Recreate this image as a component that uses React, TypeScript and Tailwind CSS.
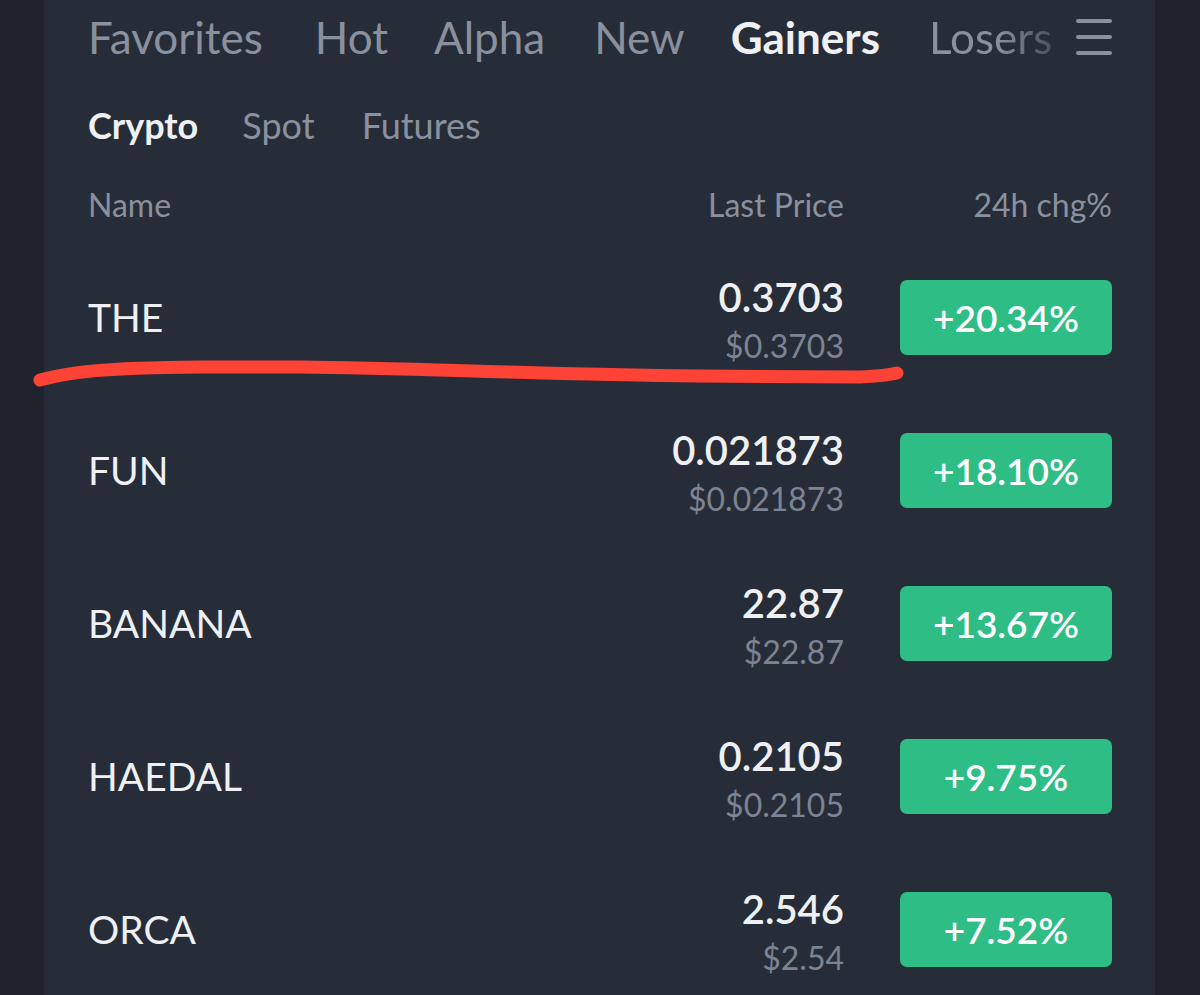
import React from "react";

const rows = [
  { name: "THE", price: "0.3703", usd: "$0.3703", chg: "+20.34%" },
  { name: "FUN", price: "0.021873", usd: "$0.021873", chg: "+18.10%" },
  { name: "BANANA", price: "22.87", usd: "$22.87", chg: "+13.67%" },
  { name: "HAEDAL", price: "0.2105", usd: "$0.2105", chg: "+9.75%" },
  { name: "ORCA", price: "2.546", usd: "$2.54", chg: "+7.52%" },
];

export default function App() {
  return (
    <div
      className="relative w-[1200px] h-[995px] overflow-hidden bg-[#1f242c] flex"
      style={{ fontFamily: "Lato, 'Open Sans', sans-serif" }}
    >
      <div className="w-[44px] shrink-0" />
      <div className="w-[1111px] shrink-0 bg-[#272d38] pl-[44px] pr-[43px] flex flex-col">
        {/* top tabs */}
        <div className="h-[76px] shrink-0 pb-[3px] flex items-center text-[44px] leading-none text-[#8a919e]">
          <span className="mr-[52px]">Favorites</span>
          <span className="mr-[46px]">Hot</span>
          <span className="mr-[49px]">Alpha</span>
          <span className="mr-[46px]">New</span>
          <span className="mr-[49px] font-bold text-[#eef0f3]">Gainers</span>
          <span className="bg-linear-to-r from-[#8a919e] from-55% to-[#4a515e] bg-clip-text text-transparent">
            Losers
          </span>
          <div className="ml-auto mt-[1px] flex flex-col gap-[12px] w-[36px]">
            <div className="h-[4px] rounded-full bg-[#8a919e]" />
            <div className="h-[4px] rounded-full bg-[#8a919e]" />
            <div className="h-[4px] rounded-full bg-[#8a919e]" />
          </div>
        </div>
        {/* sub tabs */}
        <div className="h-[98px] shrink-0 flex items-center text-[36px] leading-none text-[#8a919e]">
          <span className="mr-[44px] font-bold text-[#eef0f3]">Crypto</span>
          <span className="mr-[47px]">Spot</span>
          <span>Futures</span>
        </div>
        {/* header */}
        <div className="h-[67px] shrink-0 pb-[6px] flex items-center text-[32px] leading-none text-[#8a919e]">
          <span className="flex-1">Name</span>
          <span>Last Price</span>
          <span className="w-[268px] text-right">24h chg%</span>
        </div>
        {rows.map((r) => (
          <div key={r.name} className="h-[153px] shrink-0 flex items-center">
            <span className="flex-1 text-[39px] text-[#eef0f3] leading-none">{r.name}</span>
            <div className="flex flex-col items-end mt-[10px]">
              <span className="text-[40px] leading-[46px] font-semibold text-[#eef0f3]">{r.price}</span>
              <span className="text-[32px] leading-[52px] text-[#7c8493]">{r.usd}</span>
            </div>
            <div className="ml-[56px] w-[212px] h-[75px] rounded-[7px] bg-[#2ebd85] flex items-center justify-center text-[37px] font-semibold text-white">
              {r.chg}
            </div>
          </div>
        ))}
      </div>
      <svg className="absolute left-0 top-0" width="1200" height="995" viewBox="0 0 1200 995">
        <path
          d="M40 380 C 70 372, 100 368, 200 367 L 300 367 C 420 368, 520 374, 700 376 L 860 377 C 880 376, 893 374, 897 373"
          fill="none"
          stroke="#fd4236"
          strokeWidth="13"
          strokeLinecap="round"
          strokeLinejoin="round"
        />
      </svg>
    </div>
  );
}
